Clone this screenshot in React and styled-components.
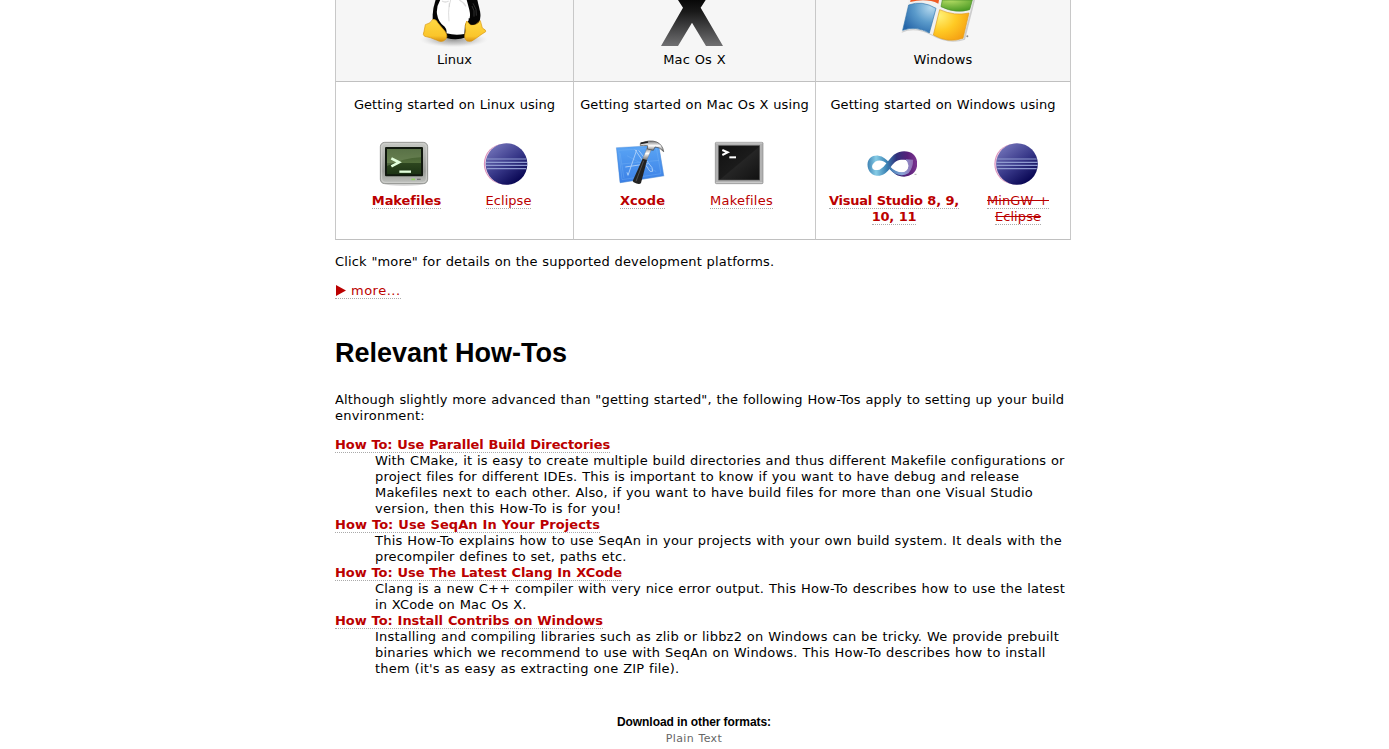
import React from 'react';
import styled, { createGlobalStyle } from 'styled-components';

const Global = createGlobalStyle`
  body {
    margin: 0;
    overflow: hidden;
    background: #fff;
    color: #000;
    font: 13px/16px "DejaVu Sans", Verdana, sans-serif;
    word-spacing: 0.4px;
  }
`;

const Page = styled.main`
  width: 736px;
  height: 749px;
  margin-left: 335px;
  overflow: hidden;
`;

const Platforms = styled.section`
  display: grid;
  grid-template-columns: 238px 242px 256px;
  height: 240px;
  grid-template-rows: 82px 158px;
`;

const Cell = styled.div`
  box-sizing: border-box;
  min-width: 0;
  border-left: 1px solid #c8c8c8;
  border-bottom: 1px solid #c0c0c0;
  &:nth-child(3n) { border-right: 1px solid #c8c8c8; }
`;

const HeadCell = styled(Cell)`
  display: flex;
  flex-direction: column;
  align-items: center;
  background: #f6f6f6;
`;

const StartCell = styled(Cell)`
  padding-top: 15px;
  text-align: center;
`;

const Logo = styled.svg`
  display: block;
  width: 110px;
  height: 52px;
`;

const Line = styled.span`
  white-space: nowrap;
  letter-spacing: ${p => p.$ls || 0}px;
`;

const Row = styled(Line)`
  display: block;
`;

const Tools = styled.div`
  display: flex;
  gap: ${p => p.$gap || 0}px;
  padding: 25px 0 0 ${p => p.$start}px;
  text-align: center;
`;

const Tool = styled.div`
  display: flex;
  flex: none;
  flex-direction: column;
  align-items: center;
  width: ${p => p.$w}px;
`;

const Icon = styled.svg`
  display: block;
  width: 50px;
  height: 50px;
  margin: 0 5px 5px 0;
`;

const Link = styled.a`
  color: #b00;
  border-bottom: 1px dotted #aaa;
  white-space: nowrap;
  font-weight: ${p => (p.$bold ? 700 : 400)};
  letter-spacing: ${p => p.$ls || 0}px;
  text-decoration: ${p => (p.$strike ? 'line-through' : 'none')};
`;

const Paragraph = styled.p`
  margin: ${p => p.$top}px 0 0;
`;

const Arrow = styled.svg`
  width: 16px;
  height: 11px;
  vertical-align: -1px;
`;

const Heading = styled.h1`
  margin: 38px 0 0;
  font: 700 27px/32px "Liberation Sans", Arial, sans-serif;
  word-spacing: 0;
`;

const HowTos = styled.dl`
  margin: 13px 0 0;
`;

const Detail = styled.dd`
  margin: 0 0 0 40px;
`;

const Footer = styled.footer`
  margin: 37px 18px 0 0;
  text-align: center;
`;

const FootTitle = styled.h3`
  margin: 0;
  font: 700 12px/16px "Liberation Sans", Arial, sans-serif;
  letter-spacing: -0.08px;
  word-spacing: 0;
`;

const FootLink = styled.a`
  display: block;
  color: #666;
  font-size: 11px;
  line-height: 18px;
  letter-spacing: 0.38px;
`;

const Tux = () => (
  <Logo viewBox="-1 0 330 156">
    <defs>
      <radialGradient id="tuxShade"><stop offset="0" stopColor="#777" stopOpacity=".75" /><stop offset=".6" stopColor="#999" stopOpacity=".4" /><stop offset="1" stopColor="#ccc" stopOpacity="0" /></radialGradient>
      <linearGradient id="foot" x2="0" y2="1"><stop offset="0" stopColor="#ffd943" /><stop offset=".75" stopColor="#fac52b" /><stop offset="1" stopColor="#d88f10" /></linearGradient>
    </defs>
    <ellipse cx="160" cy="119" rx="102" ry="23" fill="url(#tuxShade)" />
    <path d="M107-4Q98 22 97 44L97 60 138 114Q170 122 197 112L235 70Q243 55 239 34L230-4Z" fill="#050505" />
    <path d="M122-4Q107 19 110 42Q114 68 133 80Q141 89 138 100Q165 107 192 102L194 75Q196 68 205 62Q212 51 207 29L198-4Z" fill="#fff" />
    <path d="M147 9Q143 40 146 64M151 0Q147 12 147 21" stroke="#ccc" strokeWidth="2" fill="none" />
    <path d="M125 3Q135 9 145 3M177 0Q191 8 197 19" stroke="#dedede" strokeWidth="4" fill="none" />
    <path d="M218 10Q231 27 228 47M215 18Q224 31 221 50" stroke="#444" strokeWidth="2" fill="none" />
    <path d="M75 74Q91 71 97 58Q107 56 113 69L134 94Q145 111 135 119Q124 129 108 120Q91 112 73 109Q66 105 71 94Z" fill="url(#foot)" stroke="#d99714" strokeWidth="2" />
    <path d="M199 63Q192 75 196 93Q188 116 200 123Q213 128 227 115Q243 103 256 95Q259 91 246 84Q243 73 240 62Q228 77 211 75Z" fill="url(#foot)" stroke="#d99714" strokeWidth="2" />
    <path d="M205 55Q203 77 219 74Q230 73 232 60Z" fill="#050505" />
  </Logo>
);

const MacX = () => (
  <Logo viewBox="-1 0 330 156">
    <defs><linearGradient id="xg" x2="0" y2="1"><stop offset="0" stopColor="#080808" /><stop offset=".25" stopColor="#191919" /><stop offset="1" stopColor="#707072" /></linearGradient></defs>
    <path d="M113 0H196L181 23 248 138H197L155 68 113 138H62L128 23Z" fill="url(#xg)" />
  </Logo>
);

const WinFlag = () => (
  <Logo viewBox="9 0 330 156">
    <defs>
      <radialGradient id="wb" cx=".85" cy=".15" r="1"><stop offset="0" stopColor="#b5d9ef" /><stop offset=".5" stopColor="#5b9bcb" /><stop offset="1" stopColor="#2565a8" /></radialGradient>
      <radialGradient id="wy" cx=".15" cy=".2" r="1"><stop offset="0" stopColor="#fff27a" /><stop offset=".5" stopColor="#ffca24" /><stop offset="1" stopColor="#f49b10" /></radialGradient>
      <radialGradient id="wg" cx=".3" cy="0" r="1"><stop offset="0" stopColor="#b5dc65" /><stop offset="1" stopColor="#4c9b25" /></radialGradient>
    </defs>
    <path d="M75 0H270L240 119Q191 136 139 106Q92 81 50 98Z" fill="#bcbcbc" opacity=".7" />
    <path d="M71 0H265L235 117Q192 131 139 103Q91 77 49 95Z" fill="#f0f0f0" />
    <path d="M77 0H162L160 11Q125-6 75 6Z" fill="#ef5a24" />
    <path d="M172 0H262L254 29Q213 42 168 20Z" fill="url(#wg)" stroke="#4a902c" strokeWidth="2" />
    <path d="M71 15Q111 0 153 25L133 99Q92 76 53 91Z" fill="url(#wb)" stroke="#3475ac" strokeWidth="2" />
    <path d="M164 29Q210 49 252 39L234 115Q190 131 145 105Z" fill="url(#wy)" stroke="#dc9b20" strokeWidth="2" />
    <circle cx="247" cy="109" r="3" fill="#888" />
  </Logo>
);

const GreenTerminal = () => (
  <Icon viewBox="57 24 150 150">
    <defs>
      <linearGradient id="case" x2="0" y2="1"><stop offset="0" stopColor="#c6c8c4" /><stop offset=".7" stopColor="#989a96" /><stop offset="1" stopColor="#c1c3bf" /></linearGradient>
      <linearGradient id="green" x2="0" y2="1"><stop offset="0" stopColor="#3b562b" /><stop offset=".55" stopColor="#526d3b" /><stop offset=".56" stopColor="#2d461f" /><stop offset="1" stopColor="#1c3314" /></linearGradient>
    </defs>
    <ellipse cx="132" cy="160" rx="60" ry="8" fill="#ddd" />
    <rect x="61" y="37" width="142" height="124" rx="13" fill="url(#case)" stroke="#777975" strokeWidth="2" />
    <rect x="65" y="41" width="134" height="116" rx="10" fill="none" stroke="#cfd0cd" strokeWidth="3" />
    <rect x="75" y="51" width="114" height="88" rx="3" fill="#10180e" />
    <path d="M81 57H183V133H81Z" fill="url(#green)" />
    <path d="M81 57H183V82Q130 84 81 108Z" fill="#91a67b" opacity=".35" />
    <path d="M94 85L117 97 94 109" fill="none" stroke="#e2ffdc" strokeWidth="8" />
    <path d="M118 125H153" stroke="#e2ffdc" strokeWidth="7" />
    <path d="M154 148H165" stroke="#91d360" strokeWidth="5" /><path d="M171 148H182" stroke="#777" strokeWidth="4" />
  </Icon>
);

const EclipseIcon = ({ x = 364.5 }) => (
  <Icon viewBox={`${x} 24 150 150`}>
    <defs><linearGradient id="ecl" x1=".2" y1=".1" x2=".8" y2=".9"><stop offset="0" stopColor="#6c6db4" /><stop offset=".5" stopColor="#383889" /><stop offset="1" stopColor="#080653" /></linearGradient></defs>
    <circle cx="434" cy="102" r="61" fill="#d98db9" />
    <circle cx="437" cy="102" r="61" fill="#f0d3e3" />
    <circle cx="441" cy="102" r="62.5" fill="url(#ecl)" />
    <path d="M382 87H500M379 97H503M379 106H503M382 116H500" stroke="#8f9bd0" strokeWidth="3.4" />
  </Icon>
);

const XcodeIcon = () => (
  <Icon viewBox="45 24 150 150">
    <defs>
      <linearGradient id="blue" x2="0" y2="1"><stop offset="0" stopColor="#5aa5f5" /><stop offset="1" stopColor="#3b80e6" /></linearGradient>
      <linearGradient id="steel" x2="0" y2="1"><stop offset="0" stopColor="#777" /><stop offset=".45" stopColor="#fff" /><stop offset="1" stopColor="#555" /></linearGradient>
    </defs>
    <path d="M50 55L177 47 193 139 60 160Z" fill="#b3cdec" />
    <path d="M49 53L176 46 191 137 60 158Z" fill="url(#blue)" stroke="#4583cd" />
    <path d="M56 61L169 54 183 131 66 149Z M65 102L177 91M72 145L60 69M81 77L169 125" fill="none" stroke="#80b8f5" strokeWidth="1" />
    <path d="M110 60L84 136 81 127M105 59L150 124 158 124 156 113 116 61M76 111L145 101" fill="none" stroke="#a5cbf9" strokeWidth="3" />
    <path d="M142 52L155 57 139 93 127 89Z" fill="url(#steel)" stroke="#666" />
    <path d="M128 86L141 91 123 159Q118 166 101 157L98 153Z" fill="#222" />
    <path d="M131 92L108 154" stroke="#666" strokeWidth="2" />
    <path d="M121 40Q149 28 170 36Q188 44 191 65Q178 50 165 51L160 61 142 57 143 47Q131 45 121 47Z" fill="url(#steel)" stroke="#444" strokeWidth="2" />
    <path d="M122 40L144 36" stroke="#222" strokeWidth="5" />
  </Icon>
);

const DarkTerminal = () => (
  <Icon viewBox="342 24 150 150">
    <defs><linearGradient id="dark" x2="1" y2="1"><stop offset="0" stopColor="#111" /><stop offset=".5" stopColor="#1b1b1b" /><stop offset=".52" stopColor="#252525" /><stop offset="1" stopColor="#111" /></linearGradient></defs>
    <rect x="346" y="37" width="143" height="124" rx="3" fill="#b2b2b2" stroke="#888" strokeWidth="2" />
    <path d="M348 39H487M348 158H487" stroke="#ddd" strokeWidth="2" />
    <rect x="356" y="47" width="123" height="103" fill="url(#dark)" stroke="#555" strokeWidth="2" />
    <path d="M367 60L383 67 367 75" fill="none" stroke="#fff" strokeWidth="6" /><path d="M388 82H408" stroke="#fff" strokeWidth="6" />
  </Icon>
);

const InfinityIcon = () => (
  <Icon viewBox="139.5 24 150 150">
    <defs>
      <linearGradient id="ribbon" gradientUnits="userSpaceOnUse" x1="141" y1="0" x2="291" y2="0"><stop offset="0" stopColor="#3f83b4" /><stop offset=".17" stopColor="#86cce6" /><stop offset=".38" stopColor="#3b83b4" /><stop offset=".58" stopColor="#30317b" /><stop offset=".8" stopColor="#58207a" /><stop offset="1" stopColor="#7d3590" /></linearGradient>
      <linearGradient id="fold" gradientUnits="userSpaceOnUse" x1="205" y1="0" x2="285" y2="0"><stop offset="0" stopColor="#3a7ab0" /><stop offset=".5" stopColor="#8aa5d8" /><stop offset="1" stopColor="#9460a8" /></linearGradient>
    </defs>
    <path d="M141 103C142 84 156 75 174 77C188 79 197 87 207 98L199 101C184 87 165 88 156 104C151 118 162 123 177 119C202 109 209 64 251 64C277 64 291 80 290 104C289 126 273 139 251 140C231 140 219 130 207 117C196 131 184 139 168 137C151 135 141 121 141 103Z" fill="url(#ribbon)" />
    <path d="M210 112C224 92 235 88 256 90C270 96 268 118 255 125C239 133 220 125 210 112Z" fill="#fff" />
    <path d="M207 108Q224 127 246 127Q262 125 264 108Q263 96 255 88L278 89Q278 113 264 130Q235 146 207 117Z" fill="url(#fold)" />
    <path d="M282 133H288" stroke="#888" strokeWidth="2" />
  </Icon>
);

const howTos = [
  ['How To: Use Parallel Build Directories', -0.085, [
    ['With CMake, it is easy to create multiple build directories and thus different Makefile configurations or', 0.175],
    ['project files for different IDEs. This is important to know if you want to have debug and release', 0.193],
    ['Makefiles next to each other. Also, if you want to have build files for more than one Visual Studio', 0.207],
    ['version, then this How-To is for you!', 0.309],
  ]],
  ['How To: Use SeqAn In Your Projects', 0.05, [
    ['This How-To explains how to use SeqAn in your projects with your own build system. It deals with the', 0.227],
    ['precompiler defines to set, paths etc.', 0.15],
  ]],
  ['How To: Use The Latest Clang In XCode', -0.06, [
    ['Clang is a new C++ compiler with very nice error output. This How-To describes how to use the latest', 0.218],
    ['in XCode on Mac Os X.', 0.15],
  ]],
  ['How To: Install Contribs on Windows', -0.045, [
    ['Installing and compiling libraries such as zlib or libbz2 on Windows can be tricky. We provide prebuilt', 0.206],
    ['binaries which we recommend to use with SeqAn on Windows. This How-To describes how to install', 0.21],
    ["them (it's as easy as extracting one ZIP file).", 0.215],
  ]],
];

export default function App() {
  return (
    <>
      <Global />
      <Page>
        <Platforms>
          <HeadCell><Tux /><Line>Linux</Line></HeadCell>
          <HeadCell><MacX /><Line $ls={0.15}>Mac Os X</Line></HeadCell>
          <HeadCell><WinFlag /><Line $ls={0.14}>Windows</Line></HeadCell>
          <StartCell>
            <Row $ls={0.06}>Getting started on Linux using</Row>
            <Tools $start={19}>
              <Tool $w={103}><GreenTerminal /><div><Link $bold $ls={-0.05}>Makefiles</Link></div></Tool>
              <Tool $w={101}><EclipseIcon /><div><Link $ls={0.04}>Eclipse</Link></div></Tool>
            </Tools>
          </StartCell>
          <StartCell>
            <Row $ls={0.09}>Getting started on Mac Os X using</Row>
            <Tools $start={19}>
              <Tool $w={99}><XcodeIcon /><div><Link $bold $ls={0.04}>Xcode</Link></div></Tool>
              <Tool $w={99}><DarkTerminal /><div><Link $ls={0.24}>Makefiles</Link></div></Tool>
            </Tools>
          </StartCell>
          <StartCell>
            <Row $ls={0.09}>Getting started on Windows using</Row>
            <Tools $start={9} $gap={5}>
              <Tool $w={138}><InfinityIcon /><div><Link $bold $ls={-0.25}>Visual Studio 8, 9,<br />10, 11</Link></div></Tool>
              <Tool $w={100}><EclipseIcon x={363} /><div><Link $strike $ls={0.08}>MinGW +<br />Eclipse</Link></div></Tool>
            </Tools>
          </StartCell>
        </Platforms>
        <Paragraph $top={14}><Line $ls={0.15}>Click "more" for details on the supported development platforms.</Line></Paragraph>
        <Paragraph $top={13}>
          <Link $ls={0.5}><Arrow viewBox="0 0 16 11"><path d="M1 0L11 5.5 1 11Z" fill="#b00" /></Arrow>more...</Link>
        </Paragraph>
        <Heading>Relevant How-Tos</Heading>
        <Paragraph $top={23}>
          <Row $ls={0.15}>Although slightly more advanced than "getting started", the following How-Tos apply to setting up your build</Row>
          <Row $ls={0.23}>environment:</Row>
        </Paragraph>
        <HowTos>
          {howTos.map(([title, spacing, lines]) => (
            <React.Fragment key={title}>
              <dt><Link $bold $ls={spacing}>{title}</Link></dt>
              <Detail>{lines.map(([text, ls]) => <Row key={text} $ls={ls}>{text}</Row>)}</Detail>
            </React.Fragment>
          ))}
        </HowTos>
        <Footer>
          <FootTitle>Download in other formats:</FootTitle>
          <FootLink>Plain Text</FootLink>
        </Footer>
      </Page>
    </>
  );
}
